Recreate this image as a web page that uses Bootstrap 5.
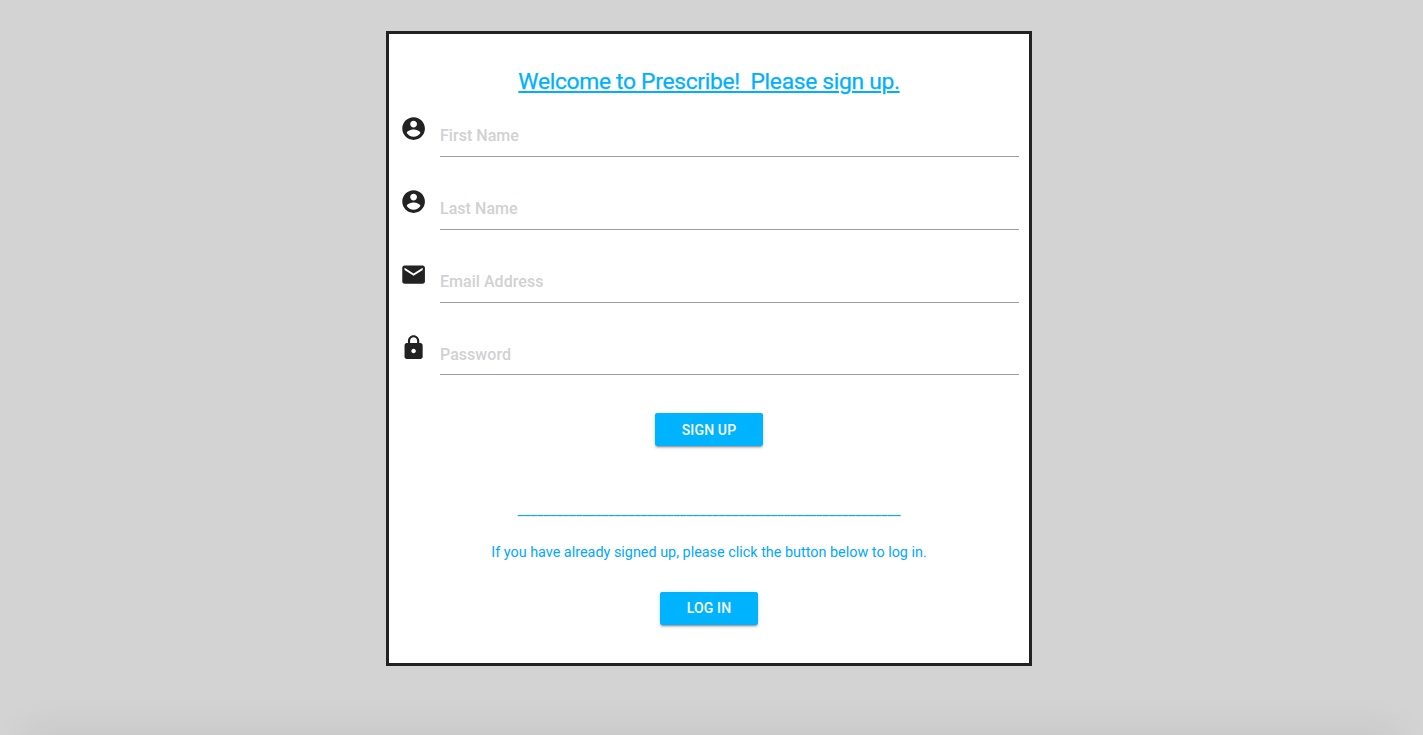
<!DOCTYPE html>
<html lang="en">
<head>
<meta charset="utf-8">
<meta name="viewport" content="width=device-width, initial-scale=1">
<title>Prescribe - Sign up</title>
<link href="https://cdn.jsdelivr.net/npm/bootstrap@5.3.0/dist/css/bootstrap.min.css" rel="stylesheet">
<style>
  body { background: #d3d3d3; font-family: Roboto, "Liberation Sans", sans-serif; color: #222; height: 735px; }
  .signup-panel { width: 646px; height: 635px; margin: 31px 0 0 386px; border: 3px solid #222; padding: 0 10px; }
  .panel-title { font-size: 22.8px; letter-spacing: -.3px; line-height: 30px; margin: 33px 0 18px; font-weight: 400; color: #00b0ff; -webkit-text-stroke: .25px #00b0ff; text-decoration: underline; text-decoration-thickness: 2px; text-underline-offset: 2px; white-space: pre; }
  form { margin-top: -1px; }
  .field-row { height: 72.8px; gap: 13px; }
  .field-row svg { width: 27.2px; height: 27.2px; fill: #222; flex: none; margin: 1px 0 0 .8px; }
  .field-row .form-control { height: 43px; padding: 1px 0 0; font-size: 16px; background: transparent; border: 0; border-bottom: 1px solid #9e9e9e; border-radius: 0; color: #222; }
  .field-row:last-of-type .form-control { padding-top: 2px; }
  .field-row:last-of-type svg { margin-top: 1.6px; }
  .field-row .form-control::placeholder { color: #d1d1d1; opacity: 1; font-weight: 500; letter-spacing: .04px; }
  .btn-wave { --bs-btn-color: #fff; --bs-btn-bg: #00b3ff; --bs-btn-hover-color: #fff; --bs-btn-hover-bg: #1abaff; --bs-btn-border-width: 0; --bs-btn-border-radius: 2px; --bs-btn-padding-y: 0; height: 33px; font-size: 14px; font-weight: 500; letter-spacing: .15px; line-height: 34px; box-shadow: 0 2px 2px 0 rgba(0,0,0,.14), 0 1px 5px 0 rgba(0,0,0,.12), 0 3px 1px -2px rgba(0,0,0,.2); }
  .btn-signup { width: 108px; margin-top: 8px; }
  .btn-login { width: 98px; margin-top: 28px; line-height: 33px; }
  .rule-text { color: #00a8ff; font-size: 14.4px; line-height: 22px; margin-top: 54px; }
  .login-hint { color: #00a8ff; font-size: 14.4px; line-height: 22px; margin-top: 20px; }
  .dock-wrap { height: 69px; padding-top: 69px; }
  .dock-shade { margin: 0 36px; box-shadow: 0 10px 40px 10px rgba(0,0,0,.11); }
</style>
</head>
<body class="overflow-hidden">
<svg class="d-none" xmlns="http://www.w3.org/2000/svg">
  <symbol id="account" viewBox="0 0 24 24"><path d="M12 2C6.480 2 2 6.480 2 12s4.480 10 10 10 10-4.480 10-10S17.520 2 12 2zm0 3c1.660 0 3 1.340 3 3s-1.340 3-3 3-3-1.340-3-3 1.340-3 3-3zm0 14.200c-2.500 0-4.710-1.280-6-3.220.030-1.990 4-3.080 6-3.080 1.990 0 5.970 1.090 6 3.080-1.290 1.940-3.500 3.220-6 3.220z"/></symbol>
  <symbol id="mail" viewBox="0 0 24 24"><path d="M20 4H4c-1.100 0-1.990.9-1.990 2L2 18c0 1.100.9 2 2 2h16c1.100 0 2-.9 2-2V6c0-1.100-.9-2-2-2zm0 4l-8 5-8-5V6l8 5 8-5v2z"/></symbol>
  <symbol id="lock" viewBox="0 0 24 24"><path d="M18 8h-1V6c0-2.760-2.240-5-5-5S7 3.240 7 6v2H6c-1.100 0-2 .9-2 2v10c0 1.100.9 2 2 2h12c1.100 0 2-.9 2-2V10c0-1.100-.9-2-2-2zm-6 9c-1.100 0-2-.9-2-2s.9-2 2-2 2 .9 2 2-.9 2-2 2zm3.100-9H8.900V6c0-1.710 1.390-3.100 3.100-3.100s3.100 1.390 3.100 3.100v2z"/></symbol>
</svg>
<main class="signup-panel bg-white overflow-hidden">
  <h1 class="panel-title text-center">Welcome to Prescribe!  Please sign up.</h1>
  <form>
    <div class="field-row d-flex align-items-start"><svg><use href="#account"/></svg><input class="form-control shadow-none" type="text" placeholder="First Name"></div>
    <div class="field-row d-flex align-items-start"><svg><use href="#account"/></svg><input class="form-control shadow-none" type="text" placeholder="Last Name"></div>
    <div class="field-row d-flex align-items-start"><svg><use href="#mail"/></svg><input class="form-control shadow-none" type="email" placeholder="Email Address"></div>
    <div class="field-row d-flex align-items-start"><svg><use href="#lock"/></svg><input class="form-control shadow-none" type="password" placeholder="Password"></div>
    <button class="btn btn-wave btn-signup d-block mx-auto px-0" type="button">SIGN UP</button>
  </form>
  <div class="rule-text text-center">___________________________________________________________</div>
  <p class="login-hint text-center mb-0">If you have already signed up, please click the button below to log in.</p>
  <button class="btn btn-wave btn-login d-block mx-auto px-0" type="button">LOG IN</button>
</main>
<div class="dock-wrap"><div class="dock-shade"></div></div>
<script src="https://cdn.jsdelivr.net/npm/bootstrap@5.3.0/dist/js/bootstrap.bundle.min.js"></script>
</body>
</html>
